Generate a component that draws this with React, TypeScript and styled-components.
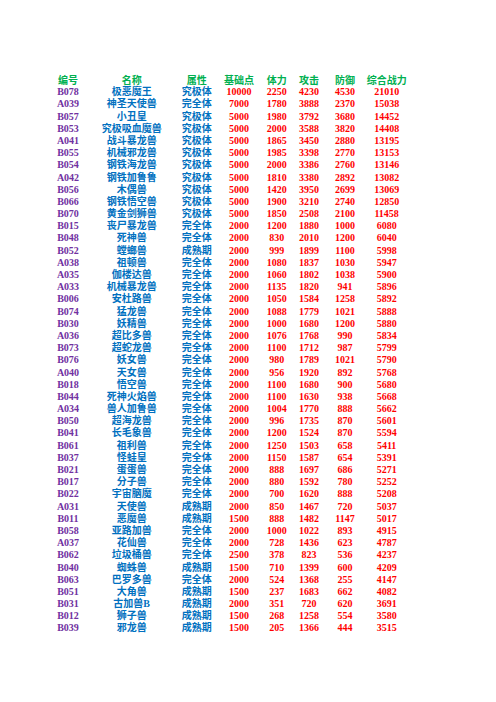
import { Fragment } from "react";
import styled, { createGlobalStyle } from "styled-components";

type Row = [string, string, string, number, number, number, number, number];

const rows: Row[] = [
  ["B078", "极恶魔王", "究极体", 10000, 2250, 4230, 4530, 21010],
  ["A039", "神圣天使兽", "完全体", 7000, 1780, 3888, 2370, 15038],
  ["B057", "小丑皇", "究极体", 5000, 1980, 3792, 3680, 14452],
  ["B053", "究极吸血魔兽", "究极体", 5000, 2000, 3588, 3820, 14408],
  ["A041", "战斗暴龙兽", "究极体", 5000, 1865, 3450, 2880, 13195],
  ["B055", "机械邪龙兽", "究极体", 5000, 1985, 3398, 2770, 13153],
  ["B054", "钢铁海龙兽", "究极体", 5000, 2000, 3386, 2760, 13146],
  ["A042", "钢铁加鲁鲁", "究极体", 5000, 1810, 3380, 2892, 13082],
  ["B056", "木偶兽", "究极体", 5000, 1420, 3950, 2699, 13069],
  ["B066", "钢铁悟空兽", "究极体", 5000, 1900, 3210, 2740, 12850],
  ["B070", "黄金剑狮兽", "究极体", 5000, 1850, 2508, 2100, 11458],
  ["B015", "丧尸暴龙兽", "完全体", 2000, 1200, 1880, 1000, 6080],
  ["B048", "死神兽", "完全体", 2000, 830, 2010, 1200, 6040],
  ["B052", "螳螂兽", "成熟期", 2000, 999, 1899, 1100, 5998],
  ["A038", "祖顿兽", "完全体", 2000, 1080, 1837, 1030, 5947],
  ["A035", "伽楼达兽", "完全体", 2000, 1060, 1802, 1038, 5900],
  ["A033", "机械暴龙兽", "完全体", 2000, 1135, 1820, 941, 5896],
  ["B006", "安杜路兽", "完全体", 2000, 1050, 1584, 1258, 5892],
  ["B074", "猛龙兽", "完全体", 2000, 1088, 1779, 1021, 5888],
  ["B030", "妖精兽", "完全体", 2000, 1000, 1680, 1200, 5880],
  ["A036", "超比多兽", "完全体", 2000, 1076, 1768, 990, 5834],
  ["B073", "超蛇龙兽", "完全体", 2000, 1100, 1712, 987, 5799],
  ["B076", "妖女兽", "完全体", 2000, 980, 1789, 1021, 5790],
  ["A040", "天女兽", "完全体", 2000, 956, 1920, 892, 5768],
  ["B018", "悟空兽", "完全体", 2000, 1100, 1680, 900, 5680],
  ["B044", "死神火焰兽", "完全体", 2000, 1100, 1630, 938, 5668],
  ["A034", "兽人加鲁兽", "完全体", 2000, 1004, 1770, 888, 5662],
  ["B050", "超海龙兽", "完全体", 2000, 996, 1735, 870, 5601],
  ["B041", "长毛象兽", "完全体", 2000, 1200, 1524, 870, 5594],
  ["B061", "祖利兽", "完全体", 2000, 1250, 1503, 658, 5411],
  ["B037", "怪蛙皇", "完全体", 2000, 1150, 1587, 654, 5391],
  ["B021", "蛋蛋兽", "完全体", 2000, 888, 1697, 686, 5271],
  ["B017", "分子兽", "完全体", 2000, 880, 1592, 780, 5252],
  ["B022", "宇宙脑魔", "完全体", 2000, 700, 1620, 888, 5208],
  ["A031", "天使兽", "成熟期", 2000, 850, 1467, 720, 5037],
  ["B011", "恶魔兽", "成熟期", 1500, 888, 1482, 1147, 5017],
  ["B058", "亚路加兽", "完全体", 2000, 1000, 1022, 893, 4915],
  ["A037", "花仙兽", "完全体", 2000, 728, 1436, 623, 4787],
  ["B062", "垃圾桶兽", "完全体", 2500, 378, 823, 536, 4237],
  ["B040", "蜘蛛兽", "成熟期", 1500, 710, 1399, 600, 4209],
  ["B063", "巴罗多兽", "完全体", 2000, 524, 1368, 255, 4147],
  ["B051", "大角兽", "成熟期", 1500, 237, 1683, 662, 4082],
  ["B031", "古加兽B", "成熟期", 2000, 351, 720, 620, 3691],
  ["B012", "狮子兽", "成熟期", 1500, 268, 1258, 554, 3580],
  ["B039", "邪龙兽", "成熟期", 1500, 205, 1366, 444, 3515],
];

const headers = ["编号", "名称", "属性", "基础点", "体力", "攻击", "防御", "综合战力"];

const GlobalStyle = createGlobalStyle`
  body {
    margin: 0;
    background: #ffffff;
  }
`;

const Page = styled.div`
  width: 496px;
  min-height: 702px;
  padding: 74px 0 0 44px;
  box-sizing: border-box;
`;

const Table = styled.div`
  display: grid;
  grid-template-columns: 48px 79.4px 50.6px 34px 41.4px 23.2px 48.8px 34.6px;
  grid-auto-rows: 12.2px;
  align-items: center;
`;

const Cell = styled.div`
  justify-self: center;
  white-space: nowrap;
  font-size: 10px;
  line-height: 12.2px;
  font-weight: 700;
`;

const Head = styled(Cell)`
  color: #00b050;
  font-family: "Noto Sans CJK SC", sans-serif;
`;

const Code = styled(Cell)`
  color: #7030a0;
  font-family: "Liberation Serif", "Noto Sans CJK SC", serif;
`;

const Name = styled(Cell)`
  color: #0070c0;
  font-family: "Liberation Serif", "Noto Sans CJK SC", sans-serif;
  font-weight: 600;
`;

const Num = styled(Cell)`
  color: #ff0000;
  font-family: "Liberation Serif", serif;
`;

export default function App() {
  return (
    <Page>
      <GlobalStyle />
      <Table>
        {headers.map((h) => (
          <Head key={h}>{h}</Head>
        ))}
        {rows.map((r) => (
          <Fragment key={r[0]}>
            <Code>{r[0]}</Code>
            <Name>{r[1]}</Name>
            <Name>{r[2]}</Name>
            {r.slice(3).map((v, i) => (
              <Num key={i}>{v}</Num>
            ))}
          </Fragment>
        ))}
      </Table>
    </Page>
  );
}
